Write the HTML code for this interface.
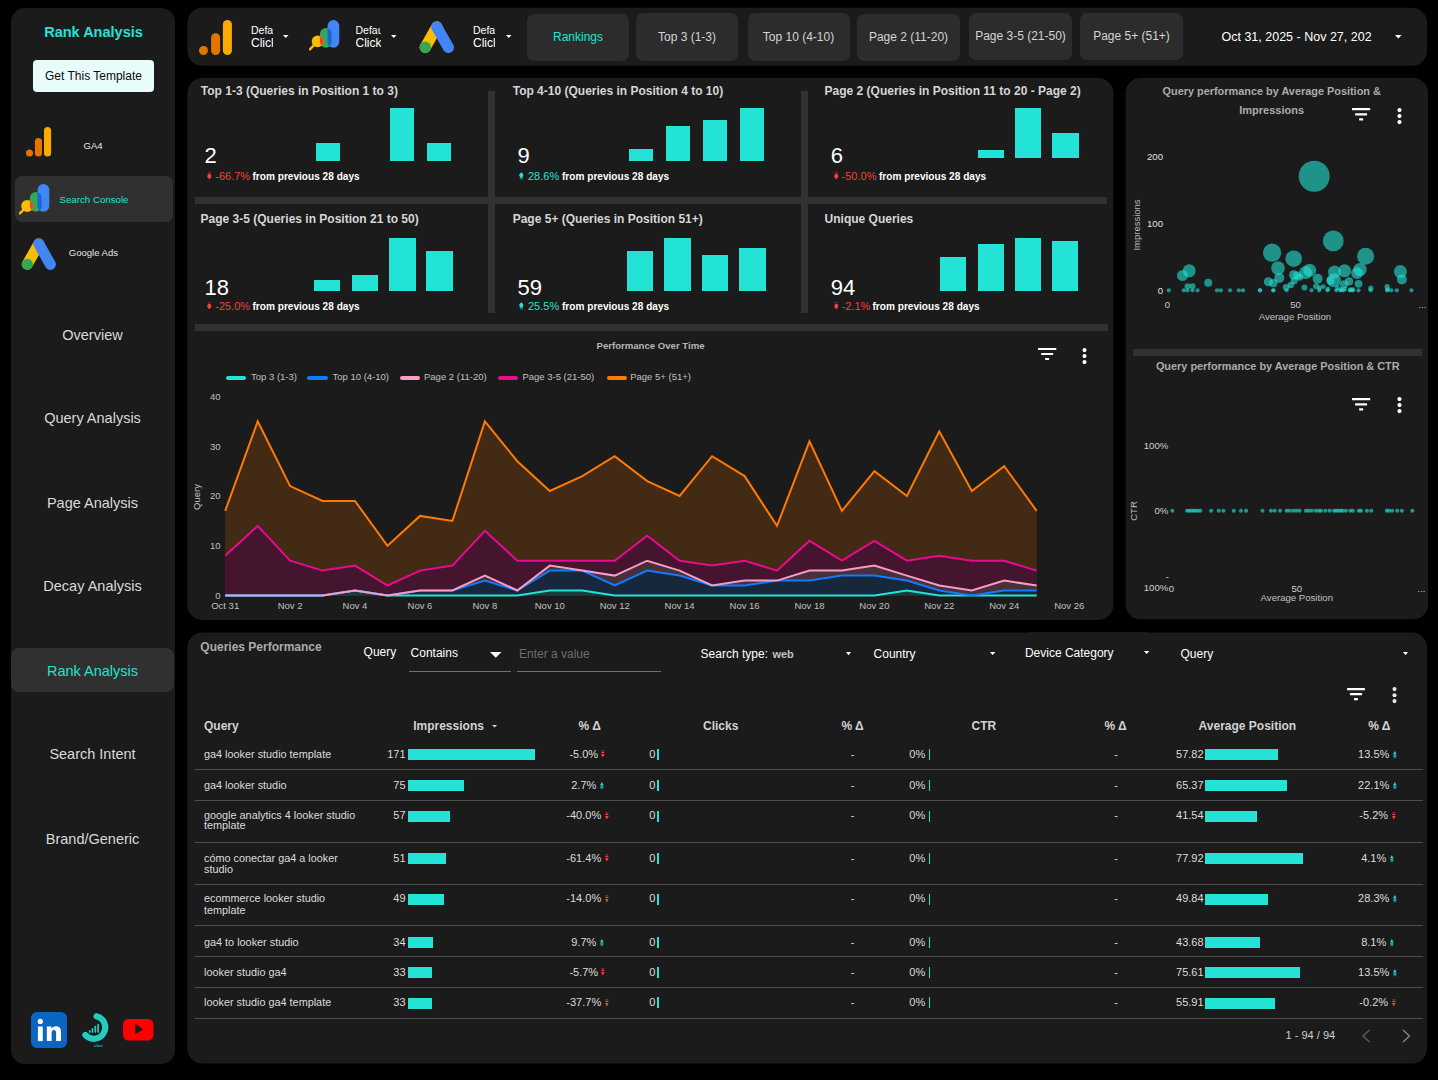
<!DOCTYPE html>
<html><head><meta charset="utf-8">
<style>
*{box-sizing:border-box;margin:0;padding:0}
html,body{width:1438px;height:1080px;overflow:hidden;background:#000}
body{position:relative;font-family:"Liberation Sans",sans-serif;color:#fff}
.a{position:absolute;white-space:nowrap}
.panel{position:absolute;background:#1b1b1b;border-radius:15px}
.sep{position:absolute;background:#313131}
.nav{position:absolute;left:10.5px;width:164px;text-align:center;font-size:14.5px;color:#d9d9d9}
.btn{position:absolute;top:14px;height:47px;width:102px;border-radius:7px;background:#2c2c2c;color:#d4d4d4;font-size:12px;text-align:center;line-height:47px}
.sc-title{position:absolute;font-size:12px;font-weight:bold;color:#d6d6d6;white-space:nowrap}
.sc-num{position:absolute;font-size:22px;color:#fff;white-space:nowrap}
.sc-cmp{position:absolute;font-size:11px;white-space:nowrap}

.bar{position:absolute;background:#23e2d6}
.red{color:#f0433a}.cy{color:#23e2d6}
</style></head>
<body>
<!-- PANELS -->
<svg class="a" style="left:0;top:0" width="1438" height="1080" viewBox="0 0 1438 1080"><g fill="#1b1b1b">
<rect x="11" y="8" width="164" height="1056" rx="14"/>
<rect x="187.4" y="7.8" width="1239.6" height="58" rx="15"/>
<rect x="187.4" y="78" width="926" height="542" rx="15"/>
<rect x="1125.6" y="78" width="302.5" height="541.3" rx="15"/>
<rect x="187.4" y="632.6" width="1239.6" height="431" rx="15"/>
</g></svg>
<!-- SIDEBAR CONTENT -->
<div class="a" style="left:11px;width:164px;top:25.2px;font-size:14.5px;line-height:14.5px;font-weight:bold;color:#23e2d6;text-align:center;padding-left:1px">Rank Analysis</div>
<div class="a" style="left:33px;top:60px;width:121px;height:32px;background:#e8fdfb;border-radius:4px;"></div>
<div class="a" style="left:33px;width:121px;top:69.8px;font-size:12px;line-height:12px;color:#0a0a0a;text-align:center">Get This Template</div>

<svg class="a" style="left:26px;top:127px" width="26" height="30" viewBox="0 0 26 30"><circle cx="3.5" cy="26" r="3.5" fill="#e37400"/><rect x="8.9" y="11" width="7.1" height="18.6" rx="3.55" fill="#e37400"/><rect x="18" y="0" width="7.1" height="29.6" rx="3.55" fill="#f9ab00"/></svg>
<div class="a" style="left:83.5px;top:140.9px;font-size:9.5px;line-height:9.5px;color:#e6e6e6">GA4</div>

<div class="a" style="left:15px;top:176px;width:158px;height:46px;background:#303030;border-radius:7px"></div>
<svg class="a" style="left:18.6px;top:184px" width="31" height="31" viewBox="0 0 31 31"><defs><clipPath id="scg"><rect x="10.9" y="8.1" width="11.8" height="19.6" rx="5.9"/></clipPath></defs>
<rect x="10.9" y="8.1" width="11.8" height="19.6" rx="5.9" fill="#34a853"/>
<rect x="18.5" y="0" width="11.8" height="27.7" rx="5.9" fill="#4285f4"/>
<g clip-path="url(#scg)"><rect x="18.5" y="0" width="11.8" height="27.7" rx="5.9" fill="#1b66d0"/></g>
<line x1="0.9" y1="29.3" x2="4.8" y2="25.4" stroke="#fbbc04" stroke-width="2.4" stroke-linecap="round"/>
<circle cx="8.2" cy="21.9" r="6" fill="#fbbc04"/>
<g clip-path="url(#scg)"><circle cx="8.2" cy="21.9" r="6" fill="#ea4335"/></g>
</svg>
<div class="a" style="left:59.5px;top:194.7px;font-size:9.7px;line-height:9.7px;color:#23e2d6">Search Console</div>

<svg class="a" style="left:21px;top:237.5px" width="36" height="33" viewBox="0 0 36 33"><line x1="17.8" y1="5.9" x2="6.3" y2="26.3" stroke="#fbbc04" stroke-width="11" stroke-linecap="round"/><line x1="17.8" y1="5.9" x2="29.4" y2="26.4" stroke="#4285f4" stroke-width="11" stroke-linecap="round"/><circle cx="6.3" cy="26.3" r="5.6" fill="#34a853"/></svg>
<div class="a" style="left:68.8px;top:247.9px;font-size:9.5px;line-height:9.5px;color:#e6e6e6">Google Ads</div>

<div class="nav" style="top:328px;line-height:14.5px">Overview</div>
<div class="nav" style="top:411.2px;line-height:14.5px">Query Analysis</div>
<div class="nav" style="top:496px;line-height:14.5px">Page Analysis</div>
<div class="nav" style="top:579.1px;line-height:14.5px">Decay Analysis</div>
<div class="a" style="left:11px;top:648px;width:163px;height:44px;background:#303030;border-radius:8px"></div>
<div class="nav" style="top:663.8px;line-height:14.5px;color:#23e2d6">Rank Analysis</div>
<div class="nav" style="top:747.1px;line-height:14.5px">Search Intent</div>
<div class="nav" style="top:832.4px;line-height:14.5px">Brand/Generic</div>

<svg class="a" style="left:31px;top:1011.5px" width="36" height="36" viewBox="0 0 36 36"><rect width="36" height="36" rx="6" fill="#0a66c2"/><circle cx="9.3" cy="9.4" r="2.6" fill="#fff"/><rect x="6.9" y="14.5" width="4.9" height="14.6" fill="#fff"/><path d="M15.8 14.5h4.6v2.1c0.8-1.4 2.5-2.4 4.6-2.4 4 0 5 2.5 5 6.1v8.8h-4.9v-7.9c0-1.7-0.4-3.1-2.2-3.1-1.9 0-2.3 1.5-2.3 3.1v7.9h-4.8z" fill="#fff"/></svg>
<svg class="a" style="left:75px;top:1005px" width="40" height="45" viewBox="0 0 40 45"><path d="M21.56 11.34 A11.4 11.4 0 1 1 10.33 30.03" fill="none" stroke="#22cdc0" stroke-width="6.2" stroke-linecap="round"/><g fill="#22cdc0"><rect x="13.95" y="25" width="1.7" height="2.9" rx="0.8"/><rect x="16.65" y="22.9" width="1.7" height="5" rx="0.8"/><rect x="19.45" y="20.8" width="1.7" height="7.1" rx="0.8"/><rect x="22.25" y="18.75" width="1.7" height="9.15" rx="0.8"/></g><text x="23.5" y="42" font-size="3.8" font-weight="bold" fill="#1fb5aa" text-anchor="middle" font-family="Liberation Sans">clare</text></svg>
<svg class="a" style="left:122.8px;top:1019.3px" width="31" height="22" viewBox="0 0 31 22"><rect width="30.5" height="21.6" rx="5.5" fill="#ff0000"/><path d="M12.3 4.2 L20 10.8 L12.3 15 Z" fill="#1b1b1b"/></svg>


<!-- TOP BAR CONTENT -->
<svg class="a" style="left:199px;top:19.6px" width="33" height="36" viewBox="0 0 33 36"><circle cx="4.5" cy="30.5" r="4.5" fill="#e37400"/><rect x="12.1" y="13.2" width="9" height="21.8" rx="4.5" fill="#e37400"/><rect x="23.9" y="0" width="9" height="35" rx="4.5" fill="#f9ab00"/></svg>
<div class="a" style="left:251px;top:25.3px;width:22.2px;overflow:hidden;font-size:10.5px;line-height:10.5px;color:#fff">Default</div>
<div class="a" style="left:251px;top:36.8px;width:22.2px;overflow:hidden;font-size:12px;line-height:12px;color:#fff">Click</div>
<svg class="a" style="left:283px;top:35px" width="6" height="4" viewBox="0 0 6 4"><path d="M0 0H5.5L2.75 3Z" fill="#fff"/></svg>

<svg class="a" style="left:309.3px;top:19.8px" width="31" height="31" viewBox="0 0 31 31"><defs><clipPath id="scg2"><rect x="10.9" y="8.1" width="11.8" height="19.6" rx="5.9"/></clipPath></defs>
<rect x="10.9" y="8.1" width="11.8" height="19.6" rx="5.9" fill="#34a853"/>
<rect x="18.5" y="0" width="11.8" height="27.7" rx="5.9" fill="#4285f4"/>
<g clip-path="url(#scg2)"><rect x="18.5" y="0" width="11.8" height="27.7" rx="5.9" fill="#1b66d0"/></g>
<line x1="0.9" y1="29.3" x2="4.8" y2="25.4" stroke="#fbbc04" stroke-width="2.4" stroke-linecap="round"/>
<circle cx="8.6" cy="21.4" r="5.9" fill="#fbbc04"/>
<g clip-path="url(#scg2)"><circle cx="8.6" cy="21.4" r="5.9" fill="#ea4335"/></g>
</svg>
<div class="a" style="left:355.5px;top:25.3px;width:25.5px;overflow:hidden;font-size:10.5px;line-height:10.5px;color:#fff">Default</div>
<div class="a" style="left:355.5px;top:36.8px;width:25.5px;overflow:hidden;font-size:12px;line-height:12px;color:#fff">Click</div>
<svg class="a" style="left:391px;top:35px" width="6" height="4" viewBox="0 0 6 4"><path d="M0 0H5.5L2.75 3Z" fill="#fff"/></svg>

<svg class="a" style="left:419px;top:20.5px" width="36" height="33" viewBox="0 0 36 33"><line x1="17.8" y1="5.9" x2="6.3" y2="26.3" stroke="#fbbc04" stroke-width="11.2" stroke-linecap="round"/><line x1="17.8" y1="5.9" x2="29.4" y2="26.4" stroke="#4285f4" stroke-width="11.2" stroke-linecap="round"/><circle cx="6.3" cy="26.3" r="5.7" fill="#34a853"/></svg>
<div class="a" style="left:473px;top:25.3px;width:22.3px;overflow:hidden;font-size:10.5px;line-height:10.5px;color:#fff">Default</div>
<div class="a" style="left:473px;top:36.8px;width:22.3px;overflow:hidden;font-size:12px;line-height:12px;color:#fff">Click</div>
<svg class="a" style="left:505.5px;top:35px" width="6" height="4" viewBox="0 0 6 4"><path d="M0 0H5.5L2.75 3Z" fill="#fff"/></svg>

<div class="btn" style="left:527px;top:14px;"></div>
<div class="btn" style="left:636px;top:13px;height:48px"></div>
<div class="btn" style="left:747.5px;top:13px;height:48px"></div>
<div class="btn" style="left:857px;top:14px;height:47px;width:103px"></div>
<div class="btn" style="left:969px;top:13px;width:103px"></div>
<div class="btn" style="left:1080px;top:13px;width:103px"></div>
<div class="a" style="left:527px;width:102px;top:31.1px;font-size:12px;line-height:12px;text-align:center;color:#23e2d6">Rankings</div>
<div class="a" style="left:636px;width:102px;top:31.1px;font-size:12px;line-height:12px;text-align:center;color:#d4d4d4">Top 3 (1-3)</div>
<div class="a" style="left:747.5px;width:102px;top:31.1px;font-size:12px;line-height:12px;text-align:center;color:#d4d4d4">Top 10 (4-10)</div>
<div class="a" style="left:857px;width:103px;top:31.1px;font-size:12px;line-height:12px;text-align:center;color:#d4d4d4">Page 2 (11-20)</div>
<div class="a" style="left:969px;width:103px;top:30px;font-size:12px;line-height:12px;text-align:center;color:#d4d4d4">Page 3-5 (21-50)</div>
<div class="a" style="left:1080px;width:103px;top:30px;font-size:12px;line-height:12px;text-align:center;color:#d4d4d4">Page 5+ (51+)</div>
<div class="a" style="left:1221.5px;top:31.2px;font-size:12.5px;line-height:12.5px;color:#fff">Oct 31, 2025 - Nov 27, 202</div>
<svg class="a" style="left:1395px;top:35.3px" width="7" height="4" viewBox="0 0 7 4"><path d="M0 0H6.6L3.3 3.5Z" fill="#fff"/></svg>

<!-- SCORECARDS -->
<div class="sep" style="left:488px;top:91px;width:7px;height:222px"></div><div class="sep" style="left:801px;top:91px;width:7px;height:222px"></div><div class="sep" style="left:195px;top:197px;width:912px;height:7px"></div><div class="sep" style="left:195px;top:324px;width:913px;height:7px"></div><div class="sc-title" style="left:200.8px;top:85.14px;line-height:12px">Top 1-3 (Queries in Position 1 to 3)</div><div class="sc-num" style="left:204.5px;top:145.28px;line-height:22px">2</div><svg class="a" style="left:206.5px;top:172.0px" width="5" height="8" viewBox="0 0 5 8"><rect x="0.8" y="0" width="3" height="1.3" fill="#f0433a" fill-opacity="0.45"/><rect x="0.8" y="1.9" width="3" height="1.5" fill="#f0433a"/><path d="M0.1 3.6H4.5L2.3 7.6Z" fill="#f0433a"/><circle cx="2.3" cy="4.6" r="1.9" fill="#f0433a"/></svg><div class="sc-cmp" style="left:215.3px;top:170.69px;line-height:11px;color:#f0433a">-66.7%</div><div class="sc-cmp" style="left:252.5px;top:171.53px;line-height:10px;font-size:10.1px;font-weight:bold;color:#fff">from previous 28 days</div><div class="bar" style="left:315.9px;top:142.8px;width:24.2px;height:17.8px"></div><div class="bar" style="left:389.9px;top:107.8px;width:24.2px;height:52.8px"></div><div class="bar" style="left:426.9px;top:143px;width:24.2px;height:17.6px"></div><div class="sc-title" style="left:200.6px;top:213.24px;line-height:12px">Page 3-5 (Queries in Position 21 to 50)</div><div class="sc-num" style="left:204.5px;top:277.28px;line-height:22px">18</div><svg class="a" style="left:206.5px;top:302.1px" width="5" height="8" viewBox="0 0 5 8"><rect x="0.8" y="0" width="3" height="1.3" fill="#f0433a" fill-opacity="0.45"/><rect x="0.8" y="1.9" width="3" height="1.5" fill="#f0433a"/><path d="M0.1 3.6H4.5L2.3 7.6Z" fill="#f0433a"/><circle cx="2.3" cy="4.6" r="1.9" fill="#f0433a"/></svg><div class="sc-cmp" style="left:215.3px;top:300.79px;line-height:11px;color:#f0433a">-25.0%</div><div class="sc-cmp" style="left:252.5px;top:301.63px;line-height:10px;font-size:10.1px;font-weight:bold;color:#fff">from previous 28 days</div><div class="bar" style="left:313.9px;top:279.8px;width:26.5px;height:10.8px"></div><div class="bar" style="left:351.5px;top:275.1px;width:26.5px;height:15.5px"></div><div class="bar" style="left:389px;top:237.8px;width:26.5px;height:52.8px"></div><div class="bar" style="left:426.1px;top:250.9px;width:26.5px;height:39.7px"></div><div class="sc-title" style="left:512.7px;top:85.14px;line-height:12px">Top 4-10 (Queries in Position 4 to 10)</div><div class="sc-num" style="left:517.5px;top:145.28px;line-height:22px">9</div><svg class="a" style="left:518.5px;top:172.0px" width="5" height="8" viewBox="0 0 5 8"><path d="M0.1 4H4.5L2.3 0Z" fill="#23e2d6"/><circle cx="2.3" cy="3" r="1.9" fill="#23e2d6"/><rect x="0.8" y="4.3" width="3" height="1.5" fill="#23e2d6"/><rect x="0.8" y="6.3" width="3" height="1.3" fill="#23e2d6" fill-opacity="0.45"/></svg><div class="sc-cmp" style="left:528px;top:170.69px;line-height:11px;color:#23e2d6">28.6%</div><div class="sc-cmp" style="left:562px;top:171.53px;line-height:10px;font-size:10.1px;font-weight:bold;color:#fff">from previous 28 days</div><div class="bar" style="left:628.9px;top:149px;width:24.2px;height:11.6px"></div><div class="bar" style="left:665.8px;top:125.6px;width:24.2px;height:35.0px"></div><div class="bar" style="left:702.6px;top:119.8px;width:24.2px;height:40.8px"></div><div class="bar" style="left:739.7px;top:107.8px;width:24.2px;height:52.8px"></div><div class="sc-title" style="left:512.7px;top:213.24px;line-height:12px">Page 5+ (Queries in Position 51+)</div><div class="sc-num" style="left:517.5px;top:277.28px;line-height:22px">59</div><svg class="a" style="left:518.5px;top:302.1px" width="5" height="8" viewBox="0 0 5 8"><path d="M0.1 4H4.5L2.3 0Z" fill="#23e2d6"/><circle cx="2.3" cy="3" r="1.9" fill="#23e2d6"/><rect x="0.8" y="4.3" width="3" height="1.5" fill="#23e2d6"/><rect x="0.8" y="6.3" width="3" height="1.3" fill="#23e2d6" fill-opacity="0.45"/></svg><div class="sc-cmp" style="left:528px;top:300.79px;line-height:11px;color:#23e2d6">25.5%</div><div class="sc-cmp" style="left:562px;top:301.63px;line-height:10px;font-size:10.1px;font-weight:bold;color:#fff">from previous 28 days</div><div class="bar" style="left:626.8px;top:251px;width:26.5px;height:39.6px"></div><div class="bar" style="left:664.3px;top:238px;width:26.5px;height:52.6px"></div><div class="bar" style="left:701.9px;top:254.9px;width:26.5px;height:35.7px"></div><div class="bar" style="left:739.2px;top:248.2px;width:26.5px;height:42.4px"></div><div class="sc-title" style="left:824.6px;top:85.14px;line-height:12px">Page 2 (Queries in Position 11 to 20 - Page 2)</div><div class="sc-num" style="left:830.8px;top:145.28px;line-height:22px">6</div><svg class="a" style="left:833.5px;top:172.0px" width="5" height="8" viewBox="0 0 5 8"><rect x="0.8" y="0" width="3" height="1.3" fill="#f0433a" fill-opacity="0.45"/><rect x="0.8" y="1.9" width="3" height="1.5" fill="#f0433a"/><path d="M0.1 3.6H4.5L2.3 7.6Z" fill="#f0433a"/><circle cx="2.3" cy="4.6" r="1.9" fill="#f0433a"/></svg><div class="sc-cmp" style="left:841.6px;top:170.69px;line-height:11px;color:#f0433a">-50.0%</div><div class="sc-cmp" style="left:879px;top:171.53px;line-height:10px;font-size:10.1px;font-weight:bold;color:#fff">from previous 28 days</div><div class="bar" style="left:977.5px;top:150.1px;width:26.5px;height:8.0px"></div><div class="bar" style="left:1014.9px;top:107.8px;width:26.5px;height:50.3px"></div><div class="bar" style="left:1052.1px;top:133px;width:26.5px;height:25.1px"></div><div class="sc-title" style="left:824.6px;top:213.24px;line-height:12px">Unique Queries</div><div class="sc-num" style="left:830.8px;top:277.28px;line-height:22px">94</div><svg class="a" style="left:833.5px;top:302.1px" width="5" height="8" viewBox="0 0 5 8"><rect x="0.8" y="0" width="3" height="1.3" fill="#f0433a" fill-opacity="0.45"/><rect x="0.8" y="1.9" width="3" height="1.5" fill="#f0433a"/><path d="M0.1 3.6H4.5L2.3 7.6Z" fill="#f0433a"/><circle cx="2.3" cy="4.6" r="1.9" fill="#f0433a"/></svg><div class="sc-cmp" style="left:841.6px;top:300.79px;line-height:11px;color:#f0433a">-2.1%</div><div class="sc-cmp" style="left:872.5px;top:301.63px;line-height:10px;font-size:10.1px;font-weight:bold;color:#fff">from previous 28 days</div><div class="bar" style="left:940.1px;top:256.9px;width:26.4px;height:33.7px"></div><div class="bar" style="left:977.5px;top:243.9px;width:26.4px;height:46.7px"></div><div class="bar" style="left:1014.9px;top:238px;width:26.4px;height:52.6px"></div><div class="bar" style="left:1052.1px;top:241px;width:26.4px;height:49.6px"></div>
<svg class="a" style="left:0;top:0" width="1438" height="1080" viewBox="0 0 1438 1080"><polygon points="225.2,595.5 225.2,510.9 257.7,421.4 290.1,486.1 322.6,501.0 355.0,501.0 387.5,545.8 420.0,515.9 452.4,520.9 484.9,421.4 517.3,461.2 549.8,491.0 582.3,476.1 614.7,456.2 647.2,481.1 679.6,496.0 712.1,456.2 744.6,476.1 777.0,525.9 809.5,441.3 841.9,510.9 874.4,471.1 906.9,496.0 939.3,431.3 971.8,491.0 1004.2,466.1 1036.7,510.9 1036.7,595.5" fill="#432a15"/><polygon points="225.2,595.5 225.2,555.7 257.7,525.9 290.1,560.7 322.6,570.6 355.0,565.6 387.5,585.5 420.0,570.6 452.4,565.6 484.9,530.8 517.3,560.7 549.8,560.7 582.3,560.7 614.7,560.7 647.2,535.8 679.6,560.7 712.1,565.6 744.6,560.7 777.0,570.6 809.5,540.8 841.9,560.7 874.4,540.8 906.9,560.7 939.3,555.7 971.8,560.7 1004.2,560.7 1036.7,570.6 1036.7,595.5" fill="#45142f"/><polygon points="225.2,595.5 225.2,595.5 257.7,595.5 290.1,595.5 322.6,595.5 355.0,590.5 387.5,595.5 420.0,590.5 452.4,590.5 484.9,575.6 517.3,590.5 549.8,565.6 582.3,570.6 614.7,575.6 647.2,560.7 679.6,570.6 712.1,585.5 744.6,580.6 777.0,580.6 809.5,570.6 841.9,570.6 874.4,565.6 906.9,575.6 939.3,585.5 971.8,590.5 1004.2,580.6 1036.7,585.5 1036.7,595.5" fill="#48303a"/><polygon points="225.2,595.5 225.2,595.5 257.7,595.5 290.1,595.5 322.6,595.5 355.0,590.5 387.5,595.5 420.0,590.5 452.4,590.5 484.9,580.6 517.3,590.5 549.8,570.6 582.3,570.6 614.7,585.5 647.2,570.6 679.6,575.6 712.1,585.5 744.6,585.5 777.0,580.6 809.5,580.6 841.9,575.6 874.4,575.6 906.9,580.6 939.3,590.5 971.8,595.5 1004.2,590.5 1036.7,590.5 1036.7,595.5" fill="#17283d"/><polygon points="225.2,595.5 225.2,595.5 257.7,595.5 290.1,595.5 322.6,595.5 355.0,590.5 387.5,595.5 420.0,595.5 452.4,595.5 484.9,595.5 517.3,595.5 549.8,590.5 582.3,590.5 614.7,595.5 647.2,595.5 679.6,595.5 712.1,595.5 744.6,595.5 777.0,595.5 809.5,595.5 841.9,595.5 874.4,595.5 906.9,590.5 939.3,595.5 971.8,595.5 1004.2,595.5 1036.7,595.5 1036.7,595.5" fill="#1a3c3a"/><polyline points="225.2,595.5 257.7,595.5 290.1,595.5 322.6,595.5 355.0,590.5 387.5,595.5 420.0,595.5 452.4,595.5 484.9,595.5 517.3,595.5 549.8,590.5 582.3,590.5 614.7,595.5 647.2,595.5 679.6,595.5 712.1,595.5 744.6,595.5 777.0,595.5 809.5,595.5 841.9,595.5 874.4,595.5 906.9,590.5 939.3,595.5 971.8,595.5 1004.2,595.5 1036.7,595.5" fill="none" stroke="#23e2d6" stroke-width="2" stroke-linejoin="miter"/><polyline points="225.2,595.5 257.7,595.5 290.1,595.5 322.6,595.5 355.0,590.5 387.5,595.5 420.0,590.5 452.4,590.5 484.9,580.6 517.3,590.5 549.8,570.6 582.3,570.6 614.7,585.5 647.2,570.6 679.6,575.6 712.1,585.5 744.6,585.5 777.0,580.6 809.5,580.6 841.9,575.6 874.4,575.6 906.9,580.6 939.3,590.5 971.8,595.5 1004.2,590.5 1036.7,590.5" fill="none" stroke="#0f7bff" stroke-width="2" stroke-linejoin="miter"/><polyline points="225.2,595.5 257.7,595.5 290.1,595.5 322.6,595.5 355.0,590.5 387.5,595.5 420.0,590.5 452.4,590.5 484.9,575.6 517.3,590.5 549.8,565.6 582.3,570.6 614.7,575.6 647.2,560.7 679.6,570.6 712.1,585.5 744.6,580.6 777.0,580.6 809.5,570.6 841.9,570.6 874.4,565.6 906.9,575.6 939.3,585.5 971.8,590.5 1004.2,580.6 1036.7,585.5" fill="none" stroke="#f79cc4" stroke-width="2" stroke-linejoin="miter"/><polyline points="225.2,555.7 257.7,525.9 290.1,560.7 322.6,570.6 355.0,565.6 387.5,585.5 420.0,570.6 452.4,565.6 484.9,530.8 517.3,560.7 549.8,560.7 582.3,560.7 614.7,560.7 647.2,535.8 679.6,560.7 712.1,565.6 744.6,560.7 777.0,570.6 809.5,540.8 841.9,560.7 874.4,540.8 906.9,560.7 939.3,555.7 971.8,560.7 1004.2,560.7 1036.7,570.6" fill="none" stroke="#ea0a8e" stroke-width="2" stroke-linejoin="miter"/><polyline points="225.2,510.9 257.7,421.4 290.1,486.1 322.6,501.0 355.0,501.0 387.5,545.8 420.0,515.9 452.4,520.9 484.9,421.4 517.3,461.2 549.8,491.0 582.3,476.1 614.7,456.2 647.2,481.1 679.6,496.0 712.1,456.2 744.6,476.1 777.0,525.9 809.5,441.3 841.9,510.9 874.4,471.1 906.9,496.0 939.3,431.3 971.8,491.0 1004.2,466.1 1036.7,510.9" fill="none" stroke="#ff7a00" stroke-width="2" stroke-linejoin="miter"/></svg><!-- LINE CHART -->
<div class="a" style="left:596.5px;top:341px;font-size:9.6px;line-height:9.6px;font-weight:bold;color:#b5b5b5">Performance Over Time</div><svg class="a" style="left:1037.9px;top:347.9px" width="19" height="13" viewBox="0 0 19 13"><rect x="0" y="0" width="18.3" height="2.1" rx="0.5" fill="#fff"/><rect x="3.1" y="5" width="12.1" height="2.1" rx="0.5" fill="#fff"/><rect x="7.1" y="10" width="4" height="2.1" rx="0.5" fill="#fff"/></svg><svg class="a" style="left:1082px;top:347.9px" width="5" height="17" viewBox="0 0 5 17"><circle cx="2.5" cy="2.1" r="2.05" fill="#fff"/><circle cx="2.5" cy="8.1" r="2.05" fill="#fff"/><circle cx="2.5" cy="14.1" r="2.05" fill="#fff"/></svg><div class="a" style="left:225.8px;top:376px;width:20.3px;height:3.5px;border-radius:2px;background:#23e2d6"></div><div class="a" style="left:251px;top:372.2px;font-size:9.5px;line-height:9.5px;color:#c0c0c0">Top 3 (1-3)</div><div class="a" style="left:307.3px;top:376px;width:20.3px;height:3.5px;border-radius:2px;background:#0f7bff"></div><div class="a" style="left:332.5px;top:372.2px;font-size:9.5px;line-height:9.5px;color:#c0c0c0">Top 10 (4-10)</div><div class="a" style="left:400px;top:376px;width:20.3px;height:3.5px;border-radius:2px;background:#f79cc4"></div><div class="a" style="left:424px;top:372.2px;font-size:9.5px;line-height:9.5px;color:#c0c0c0">Page 2 (11-20)</div><div class="a" style="left:498px;top:376px;width:20.3px;height:3.5px;border-radius:2px;background:#ea0a8e"></div><div class="a" style="left:522.4px;top:372.2px;font-size:9.5px;line-height:9.5px;color:#c0c0c0">Page 3-5 (21-50)</div><div class="a" style="left:606.6px;top:376px;width:20.3px;height:3.5px;border-radius:2px;background:#ff7a00"></div><div class="a" style="left:630.2px;top:372.2px;font-size:9.5px;line-height:9.5px;color:#c0c0c0">Page 5+ (51+)</div><div class="a" style="left:180px;width:40.5px;text-align:right;top:591.0px;font-size:9.5px;line-height:9.5px;color:#c0c0c0">0</div><div class="a" style="left:180px;width:40.5px;text-align:right;top:541.2px;font-size:9.5px;line-height:9.5px;color:#c0c0c0">10</div><div class="a" style="left:180px;width:40.5px;text-align:right;top:491.4px;font-size:9.5px;line-height:9.5px;color:#c0c0c0">20</div><div class="a" style="left:180px;width:40.5px;text-align:right;top:441.7px;font-size:9.5px;line-height:9.5px;color:#c0c0c0">30</div><div class="a" style="left:180px;width:40.5px;text-align:right;top:391.9px;font-size:9.5px;line-height:9.5px;color:#c0c0c0">40</div><div class="a" style="left:197px;top:496.5px;font-size:9.5px;line-height:9.5px;color:#c0c0c0;transform:translate(-50%,-50%) rotate(-90deg)">Query</div><div class="a" style="left:185.2px;width:80px;text-align:center;top:600.5px;font-size:9.5px;line-height:9.5px;color:#c0c0c0">Oct 31</div><div class="a" style="left:250.1px;width:80px;text-align:center;top:600.5px;font-size:9.5px;line-height:9.5px;color:#c0c0c0">Nov 2</div><div class="a" style="left:315.0px;width:80px;text-align:center;top:600.5px;font-size:9.5px;line-height:9.5px;color:#c0c0c0">Nov 4</div><div class="a" style="left:380.0px;width:80px;text-align:center;top:600.5px;font-size:9.5px;line-height:9.5px;color:#c0c0c0">Nov 6</div><div class="a" style="left:444.9px;width:80px;text-align:center;top:600.5px;font-size:9.5px;line-height:9.5px;color:#c0c0c0">Nov 8</div><div class="a" style="left:509.8px;width:80px;text-align:center;top:600.5px;font-size:9.5px;line-height:9.5px;color:#c0c0c0">Nov 10</div><div class="a" style="left:574.7px;width:80px;text-align:center;top:600.5px;font-size:9.5px;line-height:9.5px;color:#c0c0c0">Nov 12</div><div class="a" style="left:639.6px;width:80px;text-align:center;top:600.5px;font-size:9.5px;line-height:9.5px;color:#c0c0c0">Nov 14</div><div class="a" style="left:704.6px;width:80px;text-align:center;top:600.5px;font-size:9.5px;line-height:9.5px;color:#c0c0c0">Nov 16</div><div class="a" style="left:769.5px;width:80px;text-align:center;top:600.5px;font-size:9.5px;line-height:9.5px;color:#c0c0c0">Nov 18</div><div class="a" style="left:834.4px;width:80px;text-align:center;top:600.5px;font-size:9.5px;line-height:9.5px;color:#c0c0c0">Nov 20</div><div class="a" style="left:899.3px;width:80px;text-align:center;top:600.5px;font-size:9.5px;line-height:9.5px;color:#c0c0c0">Nov 22</div><div class="a" style="left:964.2px;width:80px;text-align:center;top:600.5px;font-size:9.5px;line-height:9.5px;color:#c0c0c0">Nov 24</div><div class="a" style="left:1029.2px;width:80px;text-align:center;top:600.5px;font-size:9.5px;line-height:9.5px;color:#c0c0c0">Nov 26</div>
<!-- SCATTER PANEL -->
<div class="a" style="left:1126px;width:291.4px;top:85.7px;font-size:10.9px;line-height:11px;font-weight:bold;color:#ababab;text-align:center">Query performance by Average Position &amp;</div><div class="a" style="left:1126px;width:291.4px;top:105.3px;font-size:11px;line-height:11px;font-weight:bold;color:#ababab;text-align:center">Impressions</div><svg class="a" style="left:1351.9px;top:107.7px" width="19" height="13" viewBox="0 0 19 13"><rect x="0" y="0" width="18.2" height="2.3" rx="0.5" fill="#fff"/><rect x="3.1" y="5.2" width="12" height="2.2" rx="0.5" fill="#fff"/><rect x="7.1" y="10.2" width="4.1" height="2.2" rx="0.5" fill="#fff"/></svg><svg class="a" style="left:1396.5px;top:107.9px" width="5" height="17" viewBox="0 0 5 17"><circle cx="2.5" cy="2.1" r="2.1" fill="#fff"/><circle cx="2.5" cy="8.1" r="2.1" fill="#fff"/><circle cx="2.5" cy="14.1" r="2.1" fill="#fff"/></svg><div class="a" style="left:1120px;width:43px;text-align:right;top:151.8px;font-size:9.6px;line-height:9.5px;color:#e0e0e0">200</div><div class="a" style="left:1120px;width:43px;text-align:right;top:218.8px;font-size:9.6px;line-height:9.5px;color:#e0e0e0">100</div><div class="a" style="left:1120px;width:43px;text-align:right;top:285.7px;font-size:9.6px;line-height:9.5px;color:#e0e0e0">0</div><div class="a" style="left:1137.4px;top:225px;font-size:9.5px;line-height:9.5px;color:#bdbdbd;transform:translate(-50%,-50%) rotate(-90deg)">Impressions</div><div class="a" style="left:1127.4px;width:80px;text-align:center;top:300.3px;font-size:9.6px;line-height:9.5px;color:#c8c8c8">0</div><div class="a" style="left:1255.5px;width:80px;text-align:center;top:300.3px;font-size:9.6px;line-height:9.5px;color:#c8c8c8">50</div><div class="a" style="left:1418.5px;top:300.3px;font-size:9.5px;line-height:9.5px;color:#c8c8c8">...</div><div class="a" style="left:1254.9px;width:80px;text-align:center;top:312.4px;font-size:9.6px;line-height:9.5px;color:#c0c0c0">Average Position</div><svg class="a" style="left:0;top:0" width="1438" height="1080" viewBox="0 0 1438 1080"><g fill="#23e2d6" fill-opacity="0.6"><circle cx="1314.2" cy="176.2" r="15.5"/><circle cx="1333.3" cy="240.9" r="10.4"/><circle cx="1272.1" cy="252.7" r="9.1"/><circle cx="1293.7" cy="258.7" r="8.3"/><circle cx="1365.6" cy="256.2" r="8.5"/><circle cx="1278.0" cy="268.1" r="6.9"/><circle cx="1309.7" cy="270.2" r="6.5"/><circle cx="1305.6" cy="272.6" r="6.5"/><circle cx="1334.5" cy="272.0" r="6.5"/><circle cx="1344.6" cy="270.8" r="6.5"/><circle cx="1360.0" cy="269.6" r="6.7"/><circle cx="1357.0" cy="273.1" r="5.9"/><circle cx="1400.4" cy="271.6" r="6.5"/><circle cx="1401.9" cy="279.4" r="5"/><circle cx="1279.3" cy="277.9" r="5"/><circle cx="1268.3" cy="281.7" r="4.5"/><circle cx="1273.4" cy="283.2" r="4.1"/><circle cx="1293.7" cy="274.9" r="4.7"/><circle cx="1297.3" cy="275.5" r="4.1"/><circle cx="1299.7" cy="277.3" r="3.5"/><circle cx="1294.3" cy="280.8" r="3.5"/><circle cx="1290.8" cy="285.0" r="3.3"/><circle cx="1286.1" cy="287.3" r="3.3"/><circle cx="1317.6" cy="278.7" r="5"/><circle cx="1333.9" cy="280.2" r="7"/><circle cx="1330.4" cy="280.8" r="4.1"/><circle cx="1344.0" cy="284.4" r="4.1"/><circle cx="1349.1" cy="281.4" r="4.1"/><circle cx="1358.5" cy="283.8" r="3.9"/><circle cx="1304.4" cy="287.6" r="3"/><circle cx="1316.2" cy="286.2" r="3"/><circle cx="1319.7" cy="288.0" r="2.4"/><circle cx="1323.3" cy="286.7" r="2.4"/><circle cx="1328.0" cy="289.1" r="2.4"/><circle cx="1337.5" cy="287.9" r="2.4"/><circle cx="1341.0" cy="289.7" r="2.4"/><circle cx="1344.6" cy="289.1" r="2.4"/><circle cx="1350.5" cy="289.7" r="2.4"/><circle cx="1352.8" cy="289.7" r="2.4"/><circle cx="1370.8" cy="288.2" r="2.6"/><circle cx="1387.1" cy="286.7" r="2.6"/><circle cx="1387.7" cy="289.7" r="2.4"/><circle cx="1189.2" cy="270.8" r="6.5"/><circle cx="1182.5" cy="275.5" r="5.5"/><circle cx="1208.2" cy="282.8" r="4"/><circle cx="1187.5" cy="286.2" r="3"/><circle cx="1192.5" cy="286.2" r="3"/><circle cx="1168.8" cy="290.3" r="2.1"/><circle cx="1183.8" cy="290.3" r="2.1"/><circle cx="1187.5" cy="290.3" r="2.1"/><circle cx="1192.5" cy="290.3" r="2.1"/><circle cx="1197.5" cy="290.3" r="2.1"/><circle cx="1217.0" cy="290.3" r="2.1"/><circle cx="1220.8" cy="290.3" r="2.1"/><circle cx="1230.0" cy="290.3" r="2.1"/><circle cx="1238.8" cy="290.3" r="2.1"/><circle cx="1243.0" cy="290.3" r="2.1"/><circle cx="1260.0" cy="290.3" r="2.1"/><circle cx="1273.2" cy="290.3" r="2.1"/><circle cx="1260.0" cy="290.3" r="2.1"/><circle cx="1273.4" cy="290.3" r="2.1"/><circle cx="1286.6" cy="290.3" r="2.1"/><circle cx="1311.5" cy="290.3" r="2.1"/><circle cx="1319.2" cy="290.3" r="2.1"/><circle cx="1327.4" cy="290.3" r="2.1"/><circle cx="1336.3" cy="290.3" r="2.1"/><circle cx="1340.4" cy="290.3" r="2.1"/><circle cx="1343.4" cy="290.3" r="2.1"/><circle cx="1349.9" cy="290.3" r="2.1"/><circle cx="1352.8" cy="290.3" r="2.1"/><circle cx="1358.5" cy="290.3" r="2.1"/><circle cx="1370.6" cy="290.3" r="2.1"/><circle cx="1387.1" cy="290.3" r="2.1"/><circle cx="1391.3" cy="290.3" r="2.1"/><circle cx="1396.8" cy="290.3" r="2.1"/><circle cx="1411.4" cy="290.3" r="2.1"/></g><g fill="#23e2d6" fill-opacity="0.62"><circle cx="1172.3" cy="510.8" r="2.05"/><circle cx="1187.0" cy="510.8" r="2.05"/><circle cx="1189.2" cy="510.8" r="2.05"/><circle cx="1191.3" cy="510.8" r="2.05"/><circle cx="1193.5" cy="510.8" r="2.05"/><circle cx="1195.6" cy="510.8" r="2.05"/><circle cx="1197.8" cy="510.8" r="2.05"/><circle cx="1200.4" cy="510.8" r="2.05"/><circle cx="1211.1" cy="510.8" r="2.05"/><circle cx="1218.7" cy="510.8" r="2.05"/><circle cx="1223.4" cy="510.8" r="2.05"/><circle cx="1233.8" cy="510.8" r="2.05"/><circle cx="1240.9" cy="510.8" r="2.05"/><circle cx="1246.1" cy="510.8" r="2.05"/><circle cx="1262.5" cy="510.8" r="2.05"/><circle cx="1270.9" cy="510.8" r="2.05"/><circle cx="1274.7" cy="510.8" r="2.05"/><circle cx="1280.1" cy="510.8" r="2.05"/><circle cx="1286.6" cy="510.8" r="2.05"/><circle cx="1289.4" cy="510.8" r="2.05"/><circle cx="1293.1" cy="510.8" r="2.05"/><circle cx="1296.3" cy="510.8" r="2.05"/><circle cx="1299.5" cy="510.8" r="2.05"/><circle cx="1306.0" cy="510.8" r="2.05"/><circle cx="1308.8" cy="510.8" r="2.05"/><circle cx="1311.8" cy="510.8" r="2.05"/><circle cx="1315.7" cy="510.8" r="2.05"/><circle cx="1318.9" cy="510.8" r="2.05"/><circle cx="1321.1" cy="510.8" r="2.05"/><circle cx="1325.4" cy="510.8" r="2.05"/><circle cx="1329.7" cy="510.8" r="2.05"/><circle cx="1334.0" cy="510.8" r="2.05"/><circle cx="1336.2" cy="510.8" r="2.05"/><circle cx="1338.3" cy="510.8" r="2.05"/><circle cx="1340.5" cy="510.8" r="2.05"/><circle cx="1342.6" cy="510.8" r="2.05"/><circle cx="1345.9" cy="510.8" r="2.05"/><circle cx="1350.2" cy="510.8" r="2.05"/><circle cx="1352.8" cy="510.8" r="2.05"/><circle cx="1358.8" cy="510.8" r="2.05"/><circle cx="1361.0" cy="510.8" r="2.05"/><circle cx="1367.0" cy="510.8" r="2.05"/><circle cx="1371.3" cy="510.8" r="2.05"/><circle cx="1386.8" cy="510.8" r="2.05"/><circle cx="1389.0" cy="510.8" r="2.05"/><circle cx="1392.2" cy="510.8" r="2.05"/><circle cx="1397.2" cy="510.8" r="2.05"/><circle cx="1401.9" cy="510.8" r="2.05"/><circle cx="1412.3" cy="510.8" r="2.05"/></g></svg><div class="sep" style="left:1133px;top:349px;width:289px;height:7px"></div><div class="a" style="left:1126px;width:302px;top:361.2px;font-size:10.9px;line-height:11px;font-weight:bold;color:#ababab;text-align:center;padding-left:1.5px">Query performance by Average Position &amp; CTR</div><svg class="a" style="left:1351.9px;top:397.6px" width="19" height="13" viewBox="0 0 19 13"><rect x="0" y="0" width="18.2" height="2.3" rx="0.5" fill="#fff"/><rect x="3.1" y="5.2" width="12" height="2.2" rx="0.5" fill="#fff"/><rect x="7.1" y="10.2" width="4.1" height="2.2" rx="0.5" fill="#fff"/></svg><svg class="a" style="left:1396.5px;top:396.9px" width="5" height="17" viewBox="0 0 5 17"><circle cx="2.5" cy="2.1" r="2.1" fill="#fff"/><circle cx="2.5" cy="8.1" r="2.1" fill="#fff"/><circle cx="2.5" cy="14.1" r="2.1" fill="#fff"/></svg><div class="a" style="left:1120px;width:48.3px;text-align:right;top:441px;font-size:9.6px;line-height:9.5px;color:#d0d0d0">100%</div><div class="a" style="left:1120px;width:48.3px;text-align:right;top:506px;font-size:9.6px;line-height:9.5px;color:#d0d0d0">0%</div><div class="a" style="left:1120px;width:48.9px;text-align:right;top:571.6px;font-size:9.6px;line-height:9.5px;color:#d0d0d0">-</div><div class="a" style="left:1120px;width:48.3px;text-align:right;top:583.4px;font-size:9.6px;line-height:9.5px;color:#d0d0d0">100%</div><div class="a" style="left:1131.3px;width:80px;text-align:center;top:583.6px;font-size:9.6px;line-height:9.5px;color:#d0d0d0">0</div><div class="a" style="left:1256.8px;width:80px;text-align:center;top:583.6px;font-size:9.6px;line-height:9.5px;color:#d0d0d0">50</div><div class="a" style="left:1417.5px;top:584.3px;font-size:9.5px;line-height:9.5px;color:#c8c8c8">...</div><div class="a" style="left:1256.8px;width:80px;text-align:center;top:592.9px;font-size:9.6px;line-height:9.5px;color:#c0c0c0">Average Position</div><div class="a" style="left:1133.6px;top:511.2px;font-size:9.5px;line-height:9.5px;color:#bdbdbd;transform:translate(-50%,-50%) rotate(-90deg)">CTR</div>
<!-- TABLE -->
<div class="a" style="left:1027px;top:632px;width:122px;height:6px;border-radius:3px;background:#1b1b1b"></div><div class="a" style="left:200.3px;top:640.84px;font-size:12px;line-height:12px;font-weight:bold;color:#ababab;">Queries Performance</div><div class="a" style="left:363.6px;top:645.54px;font-size:12px;line-height:12px;font-weight:normal;color:#fff;">Query</div><div class="a" style="left:410.6px;top:647.44px;font-size:12px;line-height:12px;font-weight:normal;color:#fff;">Contains</div><svg class="a" style="left:489.8px;top:652.2px" width="12.0" height="6.3" viewBox="0 0 12.0 6.3"><path d="M0 0H11.5L5.75 5.8Z" fill="#fff"/></svg><div class="a" style="left:409.2px;top:671px;width:101.8px;height:1px;background:#6f6f6f"></div><div class="a" style="left:519px;top:647.84px;font-size:12px;line-height:12px;font-weight:normal;color:#6d6d6d;">Enter a value</div><div class="a" style="left:517px;top:671px;width:143.7px;height:1px;background:#6f6f6f"></div><div class="a" style="left:700.6px;top:647.64px;font-size:12px;line-height:12px;font-weight:normal;color:#fff;">Search type:</div><div class="a" style="left:772.4px;top:648.89px;font-size:11px;line-height:11px;font-weight:bold;color:#c4c4c4;">web</div><svg class="a" style="left:845.9px;top:652px" width="5.6" height="3.7" viewBox="0 0 5.6 3.7"><path d="M0 0H5.1L2.55 3.2Z" fill="#fff"/></svg><div class="a" style="left:873.6px;top:647.84px;font-size:12px;line-height:12px;font-weight:normal;color:#fff;">Country</div><svg class="a" style="left:989.8px;top:651.7px" width="5.8" height="3.6" viewBox="0 0 5.8 3.6"><path d="M0 0H5.3L2.65 3.1Z" fill="#fff"/></svg><div class="a" style="left:1024.9px;top:647.14px;font-size:12px;line-height:12px;font-weight:normal;color:#fff;">Device Category</div><svg class="a" style="left:1144.2px;top:651px" width="5.8" height="3.6" viewBox="0 0 5.8 3.6"><path d="M0 0H5.3L2.65 3.1Z" fill="#fff"/></svg><div class="a" style="left:1180.5px;top:648.04px;font-size:12px;line-height:12px;font-weight:normal;color:#fff;">Query</div><svg class="a" style="left:1402.9px;top:651.6px" width="5.6" height="3.6" viewBox="0 0 5.6 3.6"><path d="M0 0H5.1L2.55 3.1Z" fill="#fff"/></svg><svg class="a" style="left:1347px;top:687.9px" width="19" height="13" viewBox="0 0 19 13"><rect x="0" y="0" width="18" height="2.2" rx="0.5" fill="#fff"/><rect x="2.9" y="5.1" width="12.2" height="2.1" rx="0.5" fill="#fff"/><rect x="7" y="10.1" width="3.9" height="2.1" rx="0.5" fill="#fff"/></svg><svg class="a" style="left:1392.2px;top:687px" width="5" height="17" viewBox="0 0 5 17"><circle cx="2.5" cy="2.1" r="2.05" fill="#e8e8e8"/><circle cx="2.5" cy="8.2" r="2.05" fill="#e8e8e8"/><circle cx="2.5" cy="14.1" r="2.05" fill="#e8e8e8"/></svg><div class="a" style="left:204px;top:720.44px;font-size:12px;line-height:12px;font-weight:bold;color:#d2d2d2;">Query</div><div class="a" style="left:413.2px;top:720.44px;font-size:12px;line-height:12px;font-weight:bold;color:#d2d2d2;">Impressions</div><svg class="a" style="left:492.3px;top:725.4px" width="5.7" height="3.1" viewBox="0 0 5.7 3.1"><path d="M0 0H5.2L2.6 2.6Z" fill="#d0d0d0"/></svg><div class="a" style="left:578.6px;top:720.44px;font-size:12px;line-height:12px;font-weight:bold;color:#d2d2d2;">% Δ</div><div class="a" style="left:703px;top:720.44px;font-size:12px;line-height:12px;font-weight:bold;color:#d2d2d2;">Clicks</div><div class="a" style="left:841.4px;top:720.44px;font-size:12px;line-height:12px;font-weight:bold;color:#d2d2d2;">% Δ</div><div class="a" style="left:971.6px;top:720.44px;font-size:12px;line-height:12px;font-weight:bold;color:#d2d2d2;">CTR</div><div class="a" style="left:1104.5px;top:720.44px;font-size:12px;line-height:12px;font-weight:bold;color:#d2d2d2;">% Δ</div><div class="a" style="left:1198.6px;top:720.44px;font-size:12px;line-height:12px;font-weight:bold;color:#d2d2d2;">Average Position</div><div class="a" style="left:1368.2px;top:720.44px;font-size:12px;line-height:12px;font-weight:bold;color:#d2d2d2;">% Δ</div><div class="a" style="left:204px;top:748.72px;font-size:10.85px;line-height:10.85px;font-weight:normal;color:#dcdcdc;">ga4 looker studio template</div><div class="a" style="left:105.60000000000002px;width:300px;text-align:right;top:748.59px;font-size:11px;line-height:11px;font-weight:normal;color:#dcdcdc">171</div><div class="bar" style="left:407.8px;top:749.0px;width:127.7px;height:11px"></div><div class="a" style="left:569.38px;top:748.59px;font-size:11px;line-height:11px;font-weight:normal;color:#dcdcdc;">-5.0%</div><svg class="a" style="left:601.4px;top:750.3px" width="4" height="8" viewBox="0 0 4 8"><rect x="0.4" y="0" width="2.9" height="1" fill="#f0433a" fill-opacity="0.5"/><rect x="0.4" y="1.7" width="2.9" height="1.4" fill="#f0433a"/><path d="M0 3.9H3.7L1.85 7.6Z" fill="#f0433a"/></svg><div class="a" style="left:355.4px;width:300px;text-align:right;top:748.59px;font-size:11px;line-height:11px;font-weight:normal;color:#dcdcdc">0</div><div class="a" style="left:657px;top:748.8px;width:2.3px;height:11.1px;background:#23e2d6"></div><div class="a" style="left:702.7px;width:300px;text-align:center;top:748.59px;font-size:11px;line-height:11px;font-weight:normal;color:#dcdcdc">-</div><div class="a" style="left:625.2px;width:300px;text-align:right;top:748.59px;font-size:11px;line-height:11px;font-weight:normal;color:#dcdcdc">0%</div><div class="a" style="left:928.6px;top:748.8px;width:1.2px;height:11.1px;background:#23e2d6"></div><div class="a" style="left:966.2px;width:300px;text-align:center;top:748.59px;font-size:11px;line-height:11px;font-weight:normal;color:#dcdcdc">-</div><div class="a" style="left:903.5999999999999px;width:300px;text-align:right;top:748.59px;font-size:11px;line-height:11px;font-weight:normal;color:#dcdcdc">57.82</div><div class="bar" style="left:1204.9px;top:749.3px;width:73.0px;height:10.8px"></div><div class="a" style="left:1358.11px;top:748.59px;font-size:11px;line-height:11px;font-weight:normal;color:#dcdcdc;">13.5%</div><svg class="a" style="left:1393.3px;top:750.7px" width="4" height="8" viewBox="0 0 4 8"><path d="M1.85 0L3.7 3.6H0Z" fill="#23e2d6"/><rect x="0.4" y="4.3" width="2.9" height="1.4" fill="#23e2d6"/><rect x="0.4" y="6.2" width="2.9" height="1" fill="#23e2d6" fill-opacity="0.5"/></svg><div class="a" style="left:195px;top:769.1px;width:1228px;height:1px;background:#4d4d4d"></div><div class="a" style="left:204px;top:779.72px;font-size:10.85px;line-height:10.85px;font-weight:normal;color:#dcdcdc;">ga4 looker studio</div><div class="a" style="left:105.60000000000002px;width:300px;text-align:right;top:779.59px;font-size:11px;line-height:11px;font-weight:normal;color:#dcdcdc">75</div><div class="bar" style="left:407.8px;top:780.0px;width:56.0px;height:11px"></div><div class="a" style="left:571.21px;top:779.59px;font-size:11px;line-height:11px;font-weight:normal;color:#dcdcdc;">2.7%</div><svg class="a" style="left:599.6px;top:781.7px" width="4" height="8" viewBox="0 0 4 8"><path d="M1.85 0L3.7 3.6H0Z" fill="#23e2d6"/><rect x="0.4" y="4.3" width="2.9" height="1.4" fill="#23e2d6"/><rect x="0.4" y="6.2" width="2.9" height="1" fill="#23e2d6" fill-opacity="0.5"/></svg><div class="a" style="left:355.4px;width:300px;text-align:right;top:779.59px;font-size:11px;line-height:11px;font-weight:normal;color:#dcdcdc">0</div><div class="a" style="left:657px;top:779.8px;width:2.3px;height:11.1px;background:#23e2d6"></div><div class="a" style="left:702.7px;width:300px;text-align:center;top:779.59px;font-size:11px;line-height:11px;font-weight:normal;color:#dcdcdc">-</div><div class="a" style="left:625.2px;width:300px;text-align:right;top:779.59px;font-size:11px;line-height:11px;font-weight:normal;color:#dcdcdc">0%</div><div class="a" style="left:928.6px;top:779.8px;width:1.2px;height:11.1px;background:#23e2d6"></div><div class="a" style="left:966.2px;width:300px;text-align:center;top:779.59px;font-size:11px;line-height:11px;font-weight:normal;color:#dcdcdc">-</div><div class="a" style="left:903.5999999999999px;width:300px;text-align:right;top:779.59px;font-size:11px;line-height:11px;font-weight:normal;color:#dcdcdc">65.37</div><div class="bar" style="left:1204.9px;top:780.3px;width:82.5px;height:10.8px"></div><div class="a" style="left:1358.11px;top:779.59px;font-size:11px;line-height:11px;font-weight:normal;color:#dcdcdc;">22.1%</div><svg class="a" style="left:1393.3px;top:781.7px" width="4" height="8" viewBox="0 0 4 8"><path d="M1.85 0L3.7 3.6H0Z" fill="#23e2d6"/><rect x="0.4" y="4.3" width="2.9" height="1.4" fill="#23e2d6"/><rect x="0.4" y="6.2" width="2.9" height="1" fill="#23e2d6" fill-opacity="0.5"/></svg><div class="a" style="left:195px;top:800.1px;width:1228px;height:1px;background:#4d4d4d"></div><div class="a" style="left:204px;top:810.42px;font-size:10.85px;line-height:10.85px;font-weight:normal;color:#dcdcdc;">google analytics 4 looker studio</div><div class="a" style="left:204px;top:820.42px;font-size:10.85px;line-height:10.85px;font-weight:normal;color:#dcdcdc;">template</div><div class="a" style="left:105.60000000000002px;width:300px;text-align:right;top:810.29px;font-size:11px;line-height:11px;font-weight:normal;color:#dcdcdc">57</div><div class="bar" style="left:407.8px;top:810.7px;width:42.6px;height:11px"></div><div class="a" style="left:566.32px;top:810.29px;font-size:11px;line-height:11px;font-weight:normal;color:#dcdcdc;">-40.0%</div><svg class="a" style="left:604.5px;top:812.0px" width="4" height="8" viewBox="0 0 4 8"><rect x="0.4" y="0" width="2.9" height="1" fill="#f0433a" fill-opacity="0.5"/><rect x="0.4" y="1.7" width="2.9" height="1.4" fill="#f0433a"/><path d="M0 3.9H3.7L1.85 7.6Z" fill="#f0433a"/></svg><div class="a" style="left:355.4px;width:300px;text-align:right;top:810.29px;font-size:11px;line-height:11px;font-weight:normal;color:#dcdcdc">0</div><div class="a" style="left:657px;top:810.5px;width:2.3px;height:11.1px;background:#23e2d6"></div><div class="a" style="left:702.7px;width:300px;text-align:center;top:810.29px;font-size:11px;line-height:11px;font-weight:normal;color:#dcdcdc">-</div><div class="a" style="left:625.2px;width:300px;text-align:right;top:810.29px;font-size:11px;line-height:11px;font-weight:normal;color:#dcdcdc">0%</div><div class="a" style="left:928.6px;top:810.5px;width:1.2px;height:11.1px;background:#23e2d6"></div><div class="a" style="left:966.2px;width:300px;text-align:center;top:810.29px;font-size:11px;line-height:11px;font-weight:normal;color:#dcdcdc">-</div><div class="a" style="left:903.5999999999999px;width:300px;text-align:right;top:810.29px;font-size:11px;line-height:11px;font-weight:normal;color:#dcdcdc">41.54</div><div class="bar" style="left:1204.9px;top:811.0px;width:52.4px;height:10.8px"></div><div class="a" style="left:1359.33px;top:810.29px;font-size:11px;line-height:11px;font-weight:normal;color:#dcdcdc;">-5.2%</div><svg class="a" style="left:1392.1px;top:812.0px" width="4" height="8" viewBox="0 0 4 8"><rect x="0.4" y="0" width="2.9" height="1" fill="#f0433a" fill-opacity="0.5"/><rect x="0.4" y="1.7" width="2.9" height="1.4" fill="#f0433a"/><path d="M0 3.9H3.7L1.85 7.6Z" fill="#f0433a"/></svg><div class="a" style="left:195px;top:842.1px;width:1228px;height:1px;background:#4d4d4d"></div><div class="a" style="left:204px;top:852.72px;font-size:10.85px;line-height:10.85px;font-weight:normal;color:#dcdcdc;">cómo conectar ga4 a looker</div><div class="a" style="left:204px;top:863.62px;font-size:10.85px;line-height:10.85px;font-weight:normal;color:#dcdcdc;">studio</div><div class="a" style="left:105.60000000000002px;width:300px;text-align:right;top:852.59px;font-size:11px;line-height:11px;font-weight:normal;color:#dcdcdc">51</div><div class="bar" style="left:407.8px;top:853.0px;width:38.1px;height:11px"></div><div class="a" style="left:566.32px;top:852.59px;font-size:11px;line-height:11px;font-weight:normal;color:#dcdcdc;">-61.4%</div><svg class="a" style="left:604.5px;top:854.3px" width="4" height="8" viewBox="0 0 4 8"><rect x="0.4" y="0" width="2.9" height="1" fill="#f0433a" fill-opacity="0.5"/><rect x="0.4" y="1.7" width="2.9" height="1.4" fill="#f0433a"/><path d="M0 3.9H3.7L1.85 7.6Z" fill="#f0433a"/></svg><div class="a" style="left:355.4px;width:300px;text-align:right;top:852.59px;font-size:11px;line-height:11px;font-weight:normal;color:#dcdcdc">0</div><div class="a" style="left:657px;top:852.8px;width:2.3px;height:11.1px;background:#23e2d6"></div><div class="a" style="left:702.7px;width:300px;text-align:center;top:852.59px;font-size:11px;line-height:11px;font-weight:normal;color:#dcdcdc">-</div><div class="a" style="left:625.2px;width:300px;text-align:right;top:852.59px;font-size:11px;line-height:11px;font-weight:normal;color:#dcdcdc">0%</div><div class="a" style="left:928.6px;top:852.8px;width:1.2px;height:11.1px;background:#23e2d6"></div><div class="a" style="left:966.2px;width:300px;text-align:center;top:852.59px;font-size:11px;line-height:11px;font-weight:normal;color:#dcdcdc">-</div><div class="a" style="left:903.5999999999999px;width:300px;text-align:right;top:852.59px;font-size:11px;line-height:11px;font-weight:normal;color:#dcdcdc">77.92</div><div class="bar" style="left:1204.9px;top:853.3px;width:98.3px;height:10.8px"></div><div class="a" style="left:1361.16px;top:852.59px;font-size:11px;line-height:11px;font-weight:normal;color:#dcdcdc;">4.1%</div><svg class="a" style="left:1390.2px;top:854.7px" width="4" height="8" viewBox="0 0 4 8"><path d="M1.85 0L3.7 3.6H0Z" fill="#23e2d6"/><rect x="0.4" y="4.3" width="2.9" height="1.4" fill="#23e2d6"/><rect x="0.4" y="6.2" width="2.9" height="1" fill="#23e2d6" fill-opacity="0.5"/></svg><div class="a" style="left:195px;top:884.1px;width:1228px;height:1px;background:#4d4d4d"></div><div class="a" style="left:204px;top:893.42px;font-size:10.85px;line-height:10.85px;font-weight:normal;color:#dcdcdc;">ecommerce looker studio</div><div class="a" style="left:204px;top:904.52px;font-size:10.85px;line-height:10.85px;font-weight:normal;color:#dcdcdc;">template</div><div class="a" style="left:105.60000000000002px;width:300px;text-align:right;top:893.29px;font-size:11px;line-height:11px;font-weight:normal;color:#dcdcdc">49</div><div class="bar" style="left:407.8px;top:893.7px;width:36.6px;height:11px"></div><div class="a" style="left:566.32px;top:893.29px;font-size:11px;line-height:11px;font-weight:normal;color:#dcdcdc;">-14.0%</div><svg class="a" style="left:604.5px;top:895.0px" width="4" height="8" viewBox="0 0 4 8"><rect x="0.4" y="0" width="2.9" height="1" fill="#f0433a" fill-opacity="0.5"/><rect x="0.4" y="1.7" width="2.9" height="1.4" fill="#f0433a"/><path d="M0 3.9H3.7L1.85 7.6Z" fill="#f0433a"/></svg><div class="a" style="left:355.4px;width:300px;text-align:right;top:893.29px;font-size:11px;line-height:11px;font-weight:normal;color:#dcdcdc">0</div><div class="a" style="left:657px;top:893.5px;width:2.3px;height:11.1px;background:#23e2d6"></div><div class="a" style="left:702.7px;width:300px;text-align:center;top:893.29px;font-size:11px;line-height:11px;font-weight:normal;color:#dcdcdc">-</div><div class="a" style="left:625.2px;width:300px;text-align:right;top:893.29px;font-size:11px;line-height:11px;font-weight:normal;color:#dcdcdc">0%</div><div class="a" style="left:928.6px;top:893.5px;width:1.2px;height:11.1px;background:#23e2d6"></div><div class="a" style="left:966.2px;width:300px;text-align:center;top:893.29px;font-size:11px;line-height:11px;font-weight:normal;color:#dcdcdc">-</div><div class="a" style="left:903.5999999999999px;width:300px;text-align:right;top:893.29px;font-size:11px;line-height:11px;font-weight:normal;color:#dcdcdc">49.84</div><div class="bar" style="left:1204.9px;top:894.0px;width:62.9px;height:10.8px"></div><div class="a" style="left:1358.11px;top:893.29px;font-size:11px;line-height:11px;font-weight:normal;color:#dcdcdc;">28.3%</div><svg class="a" style="left:1393.3px;top:895.4px" width="4" height="8" viewBox="0 0 4 8"><path d="M1.85 0L3.7 3.6H0Z" fill="#23e2d6"/><rect x="0.4" y="4.3" width="2.9" height="1.4" fill="#23e2d6"/><rect x="0.4" y="6.2" width="2.9" height="1" fill="#23e2d6" fill-opacity="0.5"/></svg><div class="a" style="left:195px;top:925.1px;width:1228px;height:1px;background:#4d4d4d"></div><div class="a" style="left:204px;top:936.82px;font-size:10.85px;line-height:10.85px;font-weight:normal;color:#dcdcdc;">ga4 to looker studio</div><div class="a" style="left:105.60000000000002px;width:300px;text-align:right;top:936.69px;font-size:11px;line-height:11px;font-weight:normal;color:#dcdcdc">34</div><div class="bar" style="left:407.8px;top:937.1px;width:25.4px;height:11px"></div><div class="a" style="left:571.21px;top:936.69px;font-size:11px;line-height:11px;font-weight:normal;color:#dcdcdc;">9.7%</div><svg class="a" style="left:599.6px;top:938.8px" width="4" height="8" viewBox="0 0 4 8"><path d="M1.85 0L3.7 3.6H0Z" fill="#23e2d6"/><rect x="0.4" y="4.3" width="2.9" height="1.4" fill="#23e2d6"/><rect x="0.4" y="6.2" width="2.9" height="1" fill="#23e2d6" fill-opacity="0.5"/></svg><div class="a" style="left:355.4px;width:300px;text-align:right;top:936.69px;font-size:11px;line-height:11px;font-weight:normal;color:#dcdcdc">0</div><div class="a" style="left:657px;top:936.9px;width:2.3px;height:11.1px;background:#23e2d6"></div><div class="a" style="left:702.7px;width:300px;text-align:center;top:936.69px;font-size:11px;line-height:11px;font-weight:normal;color:#dcdcdc">-</div><div class="a" style="left:625.2px;width:300px;text-align:right;top:936.69px;font-size:11px;line-height:11px;font-weight:normal;color:#dcdcdc">0%</div><div class="a" style="left:928.6px;top:936.9px;width:1.2px;height:11.1px;background:#23e2d6"></div><div class="a" style="left:966.2px;width:300px;text-align:center;top:936.69px;font-size:11px;line-height:11px;font-weight:normal;color:#dcdcdc">-</div><div class="a" style="left:903.5999999999999px;width:300px;text-align:right;top:936.69px;font-size:11px;line-height:11px;font-weight:normal;color:#dcdcdc">43.68</div><div class="bar" style="left:1204.9px;top:937.4px;width:55.1px;height:10.8px"></div><div class="a" style="left:1361.16px;top:936.69px;font-size:11px;line-height:11px;font-weight:normal;color:#dcdcdc;">8.1%</div><svg class="a" style="left:1390.2px;top:938.8px" width="4" height="8" viewBox="0 0 4 8"><path d="M1.85 0L3.7 3.6H0Z" fill="#23e2d6"/><rect x="0.4" y="4.3" width="2.9" height="1.4" fill="#23e2d6"/><rect x="0.4" y="6.2" width="2.9" height="1" fill="#23e2d6" fill-opacity="0.5"/></svg><div class="a" style="left:195px;top:956.1px;width:1228px;height:1px;background:#4d4d4d"></div><div class="a" style="left:204px;top:966.72px;font-size:10.85px;line-height:10.85px;font-weight:normal;color:#dcdcdc;">looker studio ga4</div><div class="a" style="left:105.60000000000002px;width:300px;text-align:right;top:966.59px;font-size:11px;line-height:11px;font-weight:normal;color:#dcdcdc">33</div><div class="bar" style="left:407.8px;top:967.0px;width:24.6px;height:11px"></div><div class="a" style="left:569.38px;top:966.59px;font-size:11px;line-height:11px;font-weight:normal;color:#dcdcdc;">-5.7%</div><svg class="a" style="left:601.4px;top:968.3px" width="4" height="8" viewBox="0 0 4 8"><rect x="0.4" y="0" width="2.9" height="1" fill="#f0433a" fill-opacity="0.5"/><rect x="0.4" y="1.7" width="2.9" height="1.4" fill="#f0433a"/><path d="M0 3.9H3.7L1.85 7.6Z" fill="#f0433a"/></svg><div class="a" style="left:355.4px;width:300px;text-align:right;top:966.59px;font-size:11px;line-height:11px;font-weight:normal;color:#dcdcdc">0</div><div class="a" style="left:657px;top:966.8px;width:2.3px;height:11.1px;background:#23e2d6"></div><div class="a" style="left:702.7px;width:300px;text-align:center;top:966.59px;font-size:11px;line-height:11px;font-weight:normal;color:#dcdcdc">-</div><div class="a" style="left:625.2px;width:300px;text-align:right;top:966.59px;font-size:11px;line-height:11px;font-weight:normal;color:#dcdcdc">0%</div><div class="a" style="left:928.6px;top:966.8px;width:1.2px;height:11.1px;background:#23e2d6"></div><div class="a" style="left:966.2px;width:300px;text-align:center;top:966.59px;font-size:11px;line-height:11px;font-weight:normal;color:#dcdcdc">-</div><div class="a" style="left:903.5999999999999px;width:300px;text-align:right;top:966.59px;font-size:11px;line-height:11px;font-weight:normal;color:#dcdcdc">75.61</div><div class="bar" style="left:1204.9px;top:967.3px;width:95.4px;height:10.8px"></div><div class="a" style="left:1358.11px;top:966.59px;font-size:11px;line-height:11px;font-weight:normal;color:#dcdcdc;">13.5%</div><svg class="a" style="left:1393.3px;top:968.7px" width="4" height="8" viewBox="0 0 4 8"><path d="M1.85 0L3.7 3.6H0Z" fill="#23e2d6"/><rect x="0.4" y="4.3" width="2.9" height="1.4" fill="#23e2d6"/><rect x="0.4" y="6.2" width="2.9" height="1" fill="#23e2d6" fill-opacity="0.5"/></svg><div class="a" style="left:195px;top:986.8px;width:1228px;height:1px;background:#4d4d4d"></div><div class="a" style="left:204px;top:997.32px;font-size:10.85px;line-height:10.85px;font-weight:normal;color:#dcdcdc;">looker studio ga4 template</div><div class="a" style="left:105.60000000000002px;width:300px;text-align:right;top:997.19px;font-size:11px;line-height:11px;font-weight:normal;color:#dcdcdc">33</div><div class="bar" style="left:407.8px;top:997.6px;width:24.6px;height:11px"></div><div class="a" style="left:566.32px;top:997.19px;font-size:11px;line-height:11px;font-weight:normal;color:#dcdcdc;">-37.7%</div><svg class="a" style="left:604.5px;top:998.9px" width="4" height="8" viewBox="0 0 4 8"><rect x="0.4" y="0" width="2.9" height="1" fill="#f0433a" fill-opacity="0.5"/><rect x="0.4" y="1.7" width="2.9" height="1.4" fill="#f0433a"/><path d="M0 3.9H3.7L1.85 7.6Z" fill="#f0433a"/></svg><div class="a" style="left:355.4px;width:300px;text-align:right;top:997.19px;font-size:11px;line-height:11px;font-weight:normal;color:#dcdcdc">0</div><div class="a" style="left:657px;top:997.4px;width:2.3px;height:11.1px;background:#23e2d6"></div><div class="a" style="left:702.7px;width:300px;text-align:center;top:997.19px;font-size:11px;line-height:11px;font-weight:normal;color:#dcdcdc">-</div><div class="a" style="left:625.2px;width:300px;text-align:right;top:997.19px;font-size:11px;line-height:11px;font-weight:normal;color:#dcdcdc">0%</div><div class="a" style="left:928.6px;top:997.4px;width:1.2px;height:11.1px;background:#23e2d6"></div><div class="a" style="left:966.2px;width:300px;text-align:center;top:997.19px;font-size:11px;line-height:11px;font-weight:normal;color:#dcdcdc">-</div><div class="a" style="left:903.5999999999999px;width:300px;text-align:right;top:997.19px;font-size:11px;line-height:11px;font-weight:normal;color:#dcdcdc">55.91</div><div class="bar" style="left:1204.9px;top:997.9px;width:70.6px;height:10.8px"></div><div class="a" style="left:1359.33px;top:997.19px;font-size:11px;line-height:11px;font-weight:normal;color:#dcdcdc;">-0.2%</div><svg class="a" style="left:1392.1px;top:998.9px" width="4" height="8" viewBox="0 0 4 8"><rect x="0.4" y="0" width="2.9" height="1" fill="#f0433a" fill-opacity="0.5"/><rect x="0.4" y="1.7" width="2.9" height="1.4" fill="#f0433a"/><path d="M0 3.9H3.7L1.85 7.6Z" fill="#f0433a"/></svg><div class="a" style="left:195px;top:1017.9px;width:1228px;height:1px;background:#4d4d4d"></div><div class="a" style="left:1285.6px;top:1030.39px;font-size:11px;line-height:11px;font-weight:normal;color:#cfcfcf;">1 - 94 / 94</div><svg class="a" style="left:1361px;top:1029px" width="11" height="14" viewBox="0 0 11 14"><path d="M8.5 1L2 7L8.5 13" fill="none" stroke="#5e5e5e" stroke-width="1.3"/></svg><svg class="a" style="left:1400.5px;top:1029px" width="11" height="14" viewBox="0 0 11 14"><path d="M2 1L8.5 7L2 13" fill="none" stroke="#8a8a8a" stroke-width="1.3"/></svg>
<!-- CONTENT -->
</body></html>
